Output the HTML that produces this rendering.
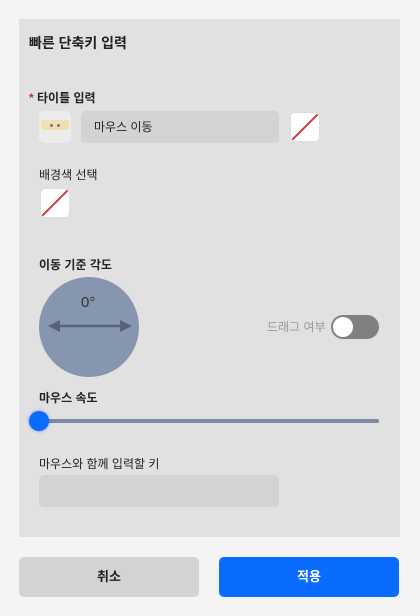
<!DOCTYPE html>
<html><head><meta charset="utf-8"><style>
*{margin:0;padding:0;box-sizing:border-box}
body{width:420px;height:616px;background:#f4f4f4;font-family:"Liberation Sans","Noto Sans CJK KR",sans-serif;position:relative;overflow:hidden;color:#222}
.panel{position:absolute;left:19px;top:19px;width:381px;height:518px;background:#e1e1e1}
.a{position:absolute}
.lbl{font-size:12px;font-weight:bold;color:#222}
.cb{width:30px;height:30px;background:#fff;border-radius:5px;overflow:hidden;border:1px solid #ddd}
.cb:after{content:"";position:absolute;left:-4px;top:13px;width:36px;height:2px;background:#d03a3a;transform:rotate(-45deg)}
</style></head><body>
<div class="panel"></div>
<div class="a" style="left:29px;top:33px;font-size:14px;font-weight:bold">빠른 단축키 입력</div>
<div class="a lbl" style="left:29px;top:89px"><span style="color:#b33">*</span> 타이틀 입력</div>
<div class="a" style="left:39px;top:111px;width:32px;height:32px;background:#ececec;border-radius:6px"><div class="a" style="left:2px;top:9px;width:28px;height:10px;background:#f0dfb0;border-radius:3px"></div><div class="a" style="left:11px;top:13px;width:3px;height:3px;background:#777;border-radius:50%"></div><div class="a" style="left:18px;top:13px;width:3px;height:3px;background:#777;border-radius:50%"></div></div>
<div class="a" style="left:81px;top:111px;width:198px;height:32px;background:#d3d3d3;border-radius:5px;font-size:12px;line-height:32px;padding-left:13px">마우스 이동</div>
<div class="a cb" style="left:290px;top:112px"></div>
<div class="a lbl" style="left:39px;top:166px;font-weight:normal">배경색 선택</div>
<div class="a cb" style="left:40px;top:188px"></div>
<div class="a lbl" style="left:39px;top:256px">이동 기준 각도</div>
<div class="a" style="left:39px;top:277px;width:100px;height:100px;border-radius:50%;background:#8696ae"></div>
<div class="a" style="left:81px;top:294px;font-size:15px;color:#333">0°</div>
<svg class="a" style="left:48px;top:318px" width="84" height="16"><line x1="6" y1="8" x2="78" y2="8" stroke="#55627a" stroke-width="2.5"/><polygon points="0,8 12,2 12,14" fill="#55627a"/><polygon points="84,8 72,2 72,14" fill="#55627a"/></svg>
<div class="a" style="left:267px;top:318px;font-size:12px;color:#999">드래그 여부</div>
<div class="a" style="left:331px;top:315px;width:48px;height:24px;border-radius:12px;background:#808080"><div class="a" style="left:2px;top:2px;width:20px;height:20px;border-radius:50%;background:#fff"></div></div>
<div class="a lbl" style="left:39px;top:389px">마우스 속도</div>
<div class="a" style="left:30px;top:419px;width:349px;height:4px;border-radius:2px;background:#7d8aa0"></div>
<div class="a" style="left:29px;top:411px;width:20px;height:20px;border-radius:50%;background:#0a6cff;box-shadow:0 0 3px rgba(0,80,255,.5)"></div>
<div class="a lbl" style="left:39px;top:455px;font-weight:normal">마우스와 함께 입력할 키</div>
<div class="a" style="left:39px;top:475px;width:240px;height:32px;background:#d3d3d3;border-radius:5px"></div>
<div class="a" style="left:19px;top:557px;width:180px;height:40px;background:#d3d3d3;border-radius:5px;text-align:center;line-height:40px;font-size:13px;font-weight:bold">취소</div>
<div class="a" style="left:219px;top:557px;width:180px;height:40px;background:#0a6cff;border-radius:5px;text-align:center;line-height:40px;font-size:13px;font-weight:bold;color:#fff">적용</div>
</body></html>
